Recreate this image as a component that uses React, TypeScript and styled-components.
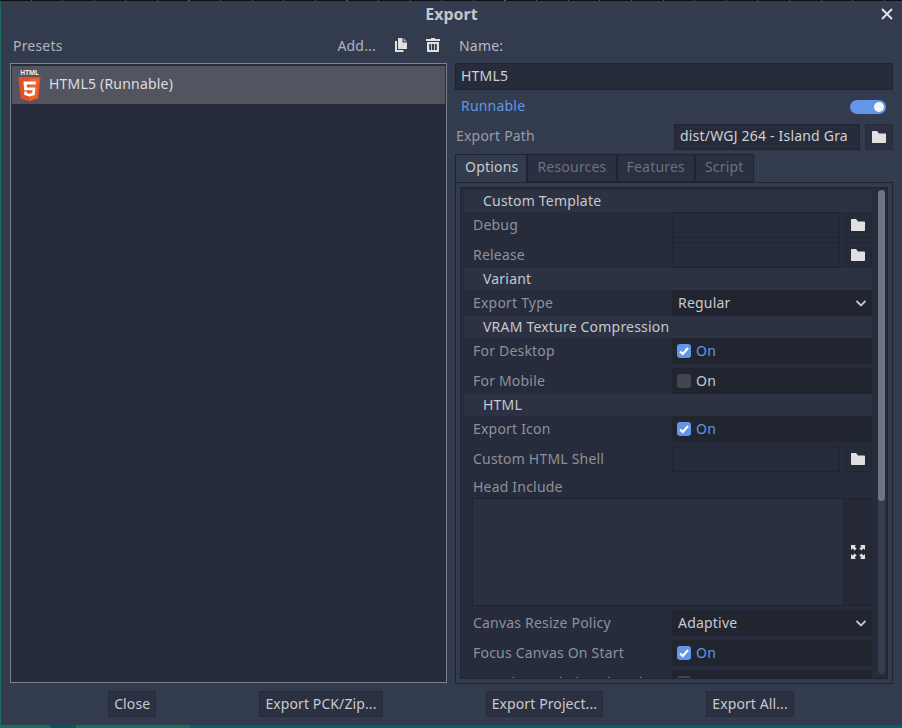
import { createGlobalStyle, styled } from "styled-components";

const GlobalStyle = createGlobalStyle`
  html, body {
    margin: 0;
    padding: 0;
    background: #10151a;
  }
  * {
    box-sizing: border-box;
  }
`;

const Screen = styled.div`
  width: 902px;
  height: 728px;
  padding: 1px 0 3px 1px;
  overflow: hidden;
  background:
    repeating-linear-gradient(90deg, #0d1116 0 30.5px, #565b66 30.5px 31.6px) top / 100% 1px no-repeat,
    linear-gradient(90deg, #1f6a62 0 50px, #0d5458 50px 76px, #226a60 76px 190px, #0b5c64 190px);
  font-family: "Noto Sans", sans-serif;
  font-size: 14px;
  letter-spacing: 0.2px;
  color: #d0d2d6;
`;

const Win = styled.div`
  height: 100%;
  display: flex;
  flex-direction: column;
  background: #333b4f;
`;

const TitleBar = styled.div`
  height: 27px;
  flex: none;
  position: relative;
  display: flex;
  align-items: center;
  justify-content: center;
  padding-bottom: 2px;
  font-weight: 700;
  font-size: 16px;
  letter-spacing: 0;
  color: #c4c6cb;
`;

const CloseX = styled.button`
  position: absolute;
  right: 9px;
  top: 7px;
  width: 12px;
  height: 12px;
  padding: 0;
  border: 0;
  background: none;
  display: flex;
`;

const Body = styled.div`
  flex: 1;
  min-height: 0;
  display: flex;
  padding: 0 8px 0 9px;
  gap: 8px;
`;

const LeftCol = styled.div`
  width: 437px;
  display: flex;
  flex-direction: column;
`;

const RightCol = styled.div`
  width: 438px;
  display: flex;
  flex-direction: column;
`;

const HeaderRow = styled.div`
  height: 35px;
  flex: none;
  display: flex;
  align-items: center;
  padding: 0 7px 1px 3px;
  gap: 19px;
`;

const Muted = styled.span<{ $grow?: boolean }>`
  color: #b1b4ba;
  margin-right: ${(p) => (p.$grow ? "auto" : "0")};
`;

const PresetList = styled.div`
  height: 620px;
  background: #262c3b;
  border: 1px solid #7c8290;
  padding: 2px 1px;
`;

const PresetRow = styled.div`
  height: 38px;
  background: #52555f;
  display: flex;
  align-items: center;
  gap: 8px;
  padding-left: 6px;
  color: #dcdde0;
`;

const PresetName = styled.span`
  padding-bottom: 3px;
`;

const NameLabel = styled.div`
  height: 35px;
  flex: none;
  display: flex;
  align-items: center;
  padding: 0 0 1px 4px;
  color: #b8bac0;
`;

const TextField = styled.div<{ $width?: number }>`
  height: 26px;
  flex: ${(p) => (p.$width ? "none" : "1")};
  width: ${(p) => (p.$width ? `${p.$width}px` : "auto")};
  background: #272c3b;
  border: 1px solid #1f2430;
  display: flex;
  align-items: center;
  padding: 0 0 ${(p) => (p.$width ? "4px" : "2px")} 5px;
  color: #cfd1d5;
  white-space: nowrap;
  overflow: hidden;
`;

const RunnableRow = styled.div`
  height: 34px;
  flex: none;
  display: flex;
  align-items: center;
  justify-content: space-between;
  padding: 0 7px 0 6px;
  color: #6495e6;
`;

const RunnableText = styled.span`
  padding-bottom: 4px;
`;

const Toggle = styled.div`
  width: 36px;
  height: 14px;
  border-radius: 7px;
  background: #6495e6;
  display: flex;
  align-items: center;
  justify-content: flex-end;
  padding-right: 2px;
`;

const ToggleKnob = styled.div`
  width: 10px;
  height: 10px;
  border-radius: 50%;
  background: #f2f4f8;
`;

const PathRow = styled.div`
  height: 26px;
  flex: none;
  display: flex;
  align-items: center;
  padding-left: 1px;
`;

const PathLabel = styled.div`
  width: 218px;
  flex: none;
  padding-bottom: 4px;
  color: #9a9da5;
`;

const IconButton = styled.div`
  width: 28px;
  height: 26px;
  flex: none;
  margin-left: 5px;
  padding-bottom: 1px;
  display: flex;
  align-items: center;
  justify-content: center;
  background: #2b3142;
  border: 1px solid #262b3a;
`;

const TabBar = styled.div`
  height: 28px;
  flex: none;
  margin-top: 4px;
  display: flex;
`;

const Tab = styled.div<{ $active?: boolean }>`
  padding: 0 ${(p) => (p.$active ? "8px" : "9px")} 4px 9px;
  display: flex;
  align-items: center;
  background: ${(p) => (p.$active ? "#333b4f" : "#2a3041")};
  color: ${(p) => (p.$active ? "#c8cace" : "#6c707b")};
  border: 1px solid #1f2430;
  border-bottom: ${(p) => (p.$active ? "0" : "1px solid #1f2430")};
`;

const TabPanel = styled.div`
  height: 502px;
  flex: none;
  border: 1px solid #1f2430;
  padding: 4px;
`;

const Scroller = styled.div`
  height: 100%;
  display: flex;
  background: #262c3b;
  border: 1px solid #1f2430;
  padding: 2px 3px 0 3px;
  overflow: hidden;
`;

const Inspector = styled.div`
  width: 408px;
  flex: none;
  display: flex;
  flex-direction: column;
`;

const ScrollTrack = styled.div`
  width: 7px;
  flex: none;
  margin-left: 6px;
  height: 484px;
  background: #383d4c;
  border-radius: 4px;
`;

const ScrollThumb = styled.div`
  height: 311px;
  background: #6f7481;
  border-radius: 4px;
`;

const Section = styled.div`
  height: 22px;
  flex: none;
  background: #2d3243;
  display: flex;
  align-items: center;
  padding: 0 0 2px 19px;
  color: #c6c8cd;
  white-space: nowrap;
`;

const Prop = styled.div<{ $tight?: boolean }>`
  height: 26px;
  flex: none;
  display: flex;
  align-items: center;
  margin-bottom: ${(p) => (p.$tight ? "0" : "4px")};
`;

const PropLabel = styled.div`
  width: 208px;
  flex: none;
  padding: 0 0 2px 9px;
  color: #8e919a;
  white-space: nowrap;
`;

const PropValue = styled.div<{ $select?: boolean }>`
  flex: 1;
  height: 26px;
  background: #212530;
  display: flex;
  align-items: center;
  padding: 0 ${(p) => (p.$select ? "6px 0 6px" : "5px 0 5px")};
  color: #c8cace;
`;

const ValueText = styled.span`
  padding-bottom: 2px;
`;

const Caret = styled.div`
  margin-left: auto;
  display: flex;
`;

const PathInput = styled.div`
  width: 168px;
  height: 26px;
  flex: none;
  background: #262b39;
  border: 1px solid #1f2430;
`;

const PathButton = styled.div`
  width: 27px;
  height: 26px;
  flex: none;
  margin-left: 5px;
  padding: 0 1px 1px 0;
  display: flex;
  align-items: center;
  justify-content: center;
  background: #262b39;
  border: 1px solid #212635;
`;

const Check = styled.div<{ $on?: boolean }>`
  width: 14px;
  height: 14px;
  border-radius: 3px;
  margin-right: 5px;
  display: flex;
  align-items: center;
  justify-content: center;
  background: ${(p) => (p.$on ? "#6495e6" : "#41454f")};
`;

const CheckText = styled.span<{ $on?: boolean }>`
  padding-bottom: 2px;
  color: ${(p) => (p.$on ? "#6495e6" : "#c8cace")};
`;

const HeadLabel = styled.div`
  height: 22px;
  flex: none;
  display: flex;
  align-items: center;
  padding: 0 0 2px 9px;
  color: #8e919a;
`;

const TextArea = styled.div`
  height: 108px;
  flex: none;
  margin: 0 0 4px 8px;
  background: #2a3040;
  border: 1px solid #1f2430;
  border-right: 0;
  display: flex;
  justify-content: flex-end;
`;

const ExpandGutter = styled.div`
  width: 29px;
  background: #252935;
  display: flex;
  align-items: center;
  justify-content: center;
`;

const Footer = styled.div`
  height: 41px;
  flex: none;
  display: flex;
  align-items: flex-start;
  justify-content: space-evenly;
  padding: 7px 5px 0 4px;
`;

const FootButton = styled.button`
  height: 26px;
  padding: 0 5px 2px;
  background: #2b3142;
  border: 1px solid #262b3a;
  color: #c8cace;
  font: inherit;
  letter-spacing: 0.1px;
`;

const FolderIcon = () => (
  <svg width="14" height="12" viewBox="0 0 14 12">
    <path d="M0 .8 A.8 .8 0 0 1 .8 0 H5 L7 2.5 H13.2 A.8 .8 0 0 1 14 3.3 V11.2 A.8 .8 0 0 1 13.2 12 H.8 A.8 .8 0 0 1 0 11.2 Z" fill="#e0e0e0" />
  </svg>
);

const CaretIcon = () => (
  <svg width="10" height="7" viewBox="0 0 10 7">
    <path d="M.5 1 L5 5.5 L9.5 1" fill="none" stroke="#c8cace" strokeWidth="1.8" />
  </svg>
);

const CheckIcon = () => (
  <svg width="14" height="14" viewBox="0 0 14 14">
    <path d="M3 7.5 L5.8 10 L11 4" fill="none" stroke="#fff" strokeWidth="2.2" />
  </svg>
);

const ExpandIcon = () => (
  <svg width="14" height="14" viewBox="0 0 14 14" fill="#e0e0e0">
    <path d="M0 0 H5 L3.6 1.6 L5.6 3.6 L3.6 5.6 L1.6 3.6 L0 5 Z" />
    <path d="M14 0 V5 L12.4 3.6 L10.4 5.6 L8.4 3.6 L10.4 1.6 L9 0 Z" />
    <path d="M0 14 V9 L1.6 10.4 L3.6 8.4 L5.6 10.4 L3.6 12.4 L5 14 Z" />
    <path d="M14 14 H9 L10.4 12.4 L8.4 10.4 L10.4 8.4 L12.4 10.4 L14 9 Z" />
  </svg>
);

const CopyIcon = () => (
  <svg width="12" height="14" viewBox="0 0 12 14" fill="#e0e0e0">
    <path d="M3 0 H7.5 V4.5 H12 V11 H3 Z" />
    <path d="M8.5 0 L12 3.5 H8.5 Z" fill="#a9acb3" />
    <path d="M0 3 H2 V12 H8.5 V14 H0 Z" />
  </svg>
);

const TrashIcon = () => (
  <svg width="14" height="14" viewBox="0 0 14 14" fill="#e0e0e0">
    <path d="M5 0 H9 V1 H14 V3 H0 V1 H5 Z" />
    <path d="M1 4 H13 V13 A1 1 0 0 1 12 14 H2 A1 1 0 0 1 1 13 Z M3.2 6 V12 H5.2 V6 Z M6 6 V12 H8 V6 Z M8.8 6 V12 H10.8 V6 Z" fillRule="evenodd" />
  </svg>
);

const Html5Icon = () => (
  <svg width="23" height="33" viewBox="0 0 23 33">
    <text x="11.5" y="6" textAnchor="middle" fontSize="6.5" fontWeight="700" letterSpacing="0" fontFamily="Noto Sans, sans-serif" fill="#f0f0f0">HTML</text>
    <path d="M.5 8 H22.5 L20.5 29.5 L11.5 32.5 L2.5 29.5 Z" fill="#e34f26" />
    <path d="M11.5 9.5 H20.9 L19.2 28.5 L11.5 30.9 Z" fill="#f06529" />
    <path d="M5.5 12.5 H17.9 L17.6 15.5 H8.8 L9.1 18.6 H17.4 L16.7 26 L11.5 27.6 L6.4 26 L6.1 22.6 H8.7 L8.9 24 L11.5 24.8 L14.2 24 L14.5 21.2 H6.2 Z" fill="#fff" />
  </svg>
);

const OptionCheck = ({ on }: { on?: boolean }) => (
  <PropValue>
    <Check $on={on}>{on && <CheckIcon />}</Check>
    <CheckText $on={on}>On</CheckText>
  </PropValue>
);

const SelectValue = ({ value }: { value: string }) => (
  <PropValue $select>
    <ValueText>{value}</ValueText>
    <Caret>
      <CaretIcon />
    </Caret>
  </PropValue>
);

const PathProp = ({ label, tight }: { label: string; tight?: boolean }) => (
  <Prop $tight={tight}>
    <PropLabel>{label}</PropLabel>
    <PathInput />
    <PathButton>
      <FolderIcon />
    </PathButton>
  </Prop>
);

export default function App() {
  return (
    <Screen>
      <GlobalStyle />
      <Win>
        <TitleBar>
          Export
          <CloseX aria-label="Close">
            <svg width="12" height="12" viewBox="0 0 12 12">
              <path d="M1 1 L11 11 M11 1 L1 11" stroke="#e6e6e6" strokeWidth="1.8" />
            </svg>
          </CloseX>
        </TitleBar>
        <Body>
          <LeftCol>
            <HeaderRow>
              <Muted $grow>Presets</Muted>
              <Muted>Add...</Muted>
              <CopyIcon />
              <TrashIcon />
            </HeaderRow>
            <PresetList>
              <PresetRow>
                <Html5Icon />
                <PresetName>HTML5 (Runnable)</PresetName>
              </PresetRow>
            </PresetList>
          </LeftCol>
          <RightCol>
            <NameLabel>Name:</NameLabel>
            <TextField>HTML5</TextField>
            <RunnableRow>
              <RunnableText>Runnable</RunnableText>
              <Toggle>
                <ToggleKnob />
              </Toggle>
            </RunnableRow>
            <PathRow>
              <PathLabel>Export Path</PathLabel>
              <TextField $width={186}>dist/WGJ 264 - Island Gra</TextField>
              <IconButton>
                <FolderIcon />
              </IconButton>
            </PathRow>
            <TabBar>
              <Tab $active>Options</Tab>
              <Tab>Resources</Tab>
              <Tab>Features</Tab>
              <Tab>Script</Tab>
            </TabBar>
            <TabPanel>
              <Scroller>
                <Inspector>
                  <Section>Custom Template</Section>
                  <PathProp label="Debug" />
                  <PathProp label="Release" tight />
                  <Section>Variant</Section>
                  <Prop $tight>
                    <PropLabel>Export Type</PropLabel>
                    <SelectValue value="Regular" />
                  </Prop>
                  <Section>VRAM Texture Compression</Section>
                  <Prop>
                    <PropLabel>For Desktop</PropLabel>
                    <OptionCheck on />
                  </Prop>
                  <Prop $tight>
                    <PropLabel>For Mobile</PropLabel>
                    <OptionCheck />
                  </Prop>
                  <Section>HTML</Section>
                  <Prop>
                    <PropLabel>Export Icon</PropLabel>
                    <OptionCheck on />
                  </Prop>
                  <PathProp label="Custom HTML Shell" />
                  <HeadLabel>Head Include</HeadLabel>
                  <TextArea>
                    <ExpandGutter>
                      <ExpandIcon />
                    </ExpandGutter>
                  </TextArea>
                  <Prop>
                    <PropLabel>Canvas Resize Policy</PropLabel>
                    <SelectValue value="Adaptive" />
                  </Prop>
                  <Prop>
                    <PropLabel>Focus Canvas On Start</PropLabel>
                    <OptionCheck on />
                  </Prop>
                  <Prop>
                    <PropLabel>Experimental Virtual Keyboard</PropLabel>
                    <OptionCheck />
                  </Prop>
                </Inspector>
                <ScrollTrack>
                  <ScrollThumb />
                </ScrollTrack>
              </Scroller>
            </TabPanel>
          </RightCol>
        </Body>
        <Footer>
          <FootButton>Close</FootButton>
          <FootButton>Export PCK/Zip...</FootButton>
          <FootButton>Export Project...</FootButton>
          <FootButton>Export All...</FootButton>
        </Footer>
      </Win>
    </Screen>
  );
}
